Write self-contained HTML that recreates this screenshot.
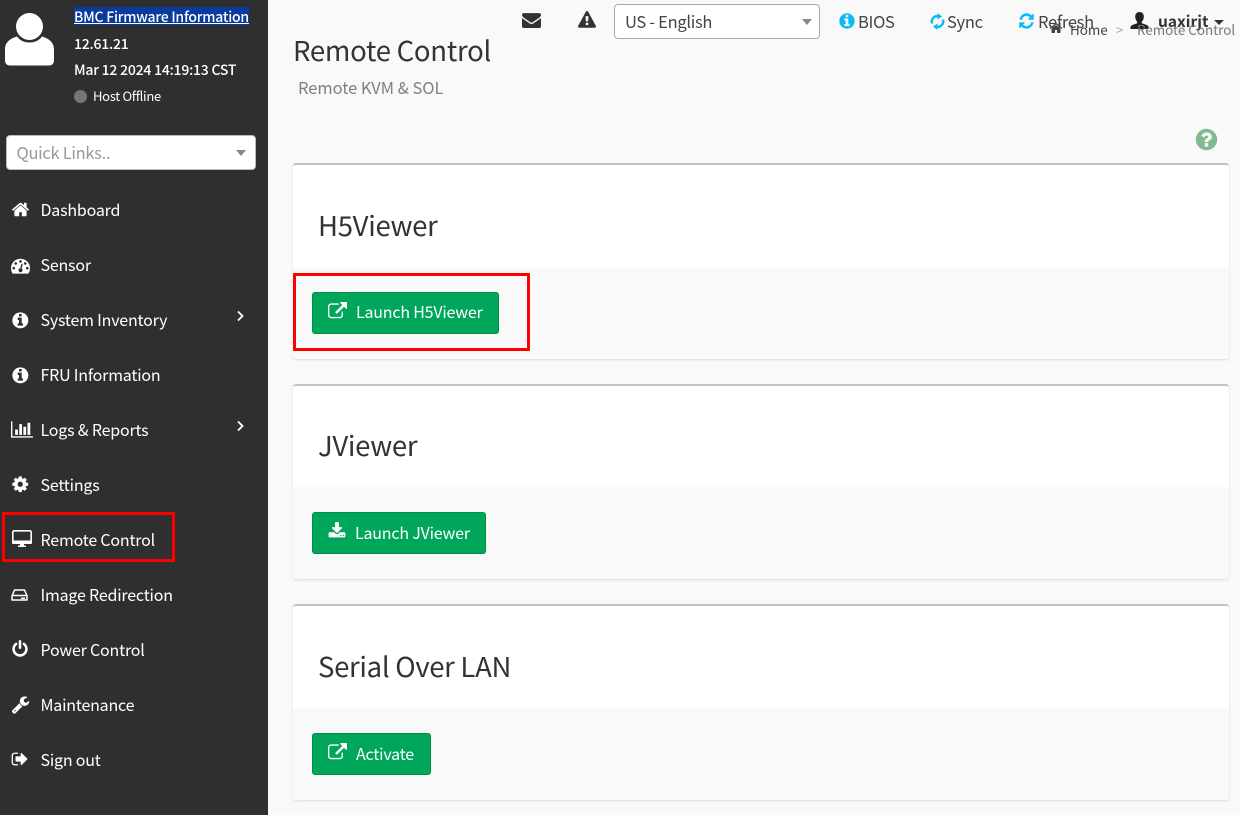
<!DOCTYPE html>
<html lang="en"><head><meta charset="utf-8"><title>Remote Control</title>
<style>
html,body{margin:0;padding:0;width:1240px;height:815px;overflow:hidden;background:#f9f9f9}
body{position:relative;font-family:"Noto Sans CJK SC","Liberation Sans",sans-serif;color:#444}
.t{position:absolute;white-space:nowrap;line-height:24px;height:24px}
svg{position:absolute;display:block}
#side{position:absolute;left:0;top:0;width:268px;height:815px;background:#2f2f2f}
.m{color:#fff;font-size:16px;letter-spacing:-.2px;left:40.5px}
.w{fill:#fff}
.s{color:#fff;font-size:14px;font-weight:500;letter-spacing:-.22px}
.card{position:absolute;left:293px;width:936px;background:#f9f9f9;border-top:2px solid #c2c2c2;border-radius:3px;box-shadow:0 1px 2px rgba(0,0,0,.12);box-sizing:border-box}
.card i{position:absolute;left:0;top:0;width:100%;background:#fff;display:block;border-radius:3px 3px 0 0}
.h{font-size:27.5px;letter-spacing:-.3px;color:#333;left:318px}
.btn{position:absolute;left:312px;height:42px;background:#00a65a;border:1px solid #008d4c;border-radius:3px;box-sizing:border-box}
.bt{color:#fff;font-size:16px;letter-spacing:-.2px}
.sel{position:absolute;background:#fff;border:1px solid #aaa;border-radius:4px;box-sizing:border-box}
.car{position:absolute;width:0;height:0;border-left:5.5px solid transparent;border-right:5.5px solid transparent;border-top:6px solid #888}
.red{position:absolute;border:3px solid #f00;box-sizing:border-box}
.top{font-size:16.5px;letter-spacing:-.3px;color:#444}
</style></head><body>
<svg width="0" height="0" style="position:absolute"><defs>
<symbol id="home" viewBox="0 0 1792 1792"><path d="M1472 992v480q0 26-19 45t-45 19h-384v-384h-256v384h-384q-26 0-45-19t-19-45v-480q0-1 .5-3t.5-3l575-474 575 474q1 2 1 6zm223-69l-62 74q-8 9-21 11h-3q-13 0-21-7l-692-577-692 577q-12 8-24 7-13-2-21-11l-62-74q-8-10-7-23.5t11-20.5l719-599q32-26 76-26t76 26l244 204v-195q0-14 9-23t23-9h192q14 0 23 9t9 23v408l219 182q10 8 11 21.5t-7 23.5z"/></symbol>
<symbol id="info" viewBox="0 0 1792 1792"><path d="M1152 1376v-160q0-14-9-23t-23-9h-96v-512q0-14-9-23t-23-9h-320q-14 0-23 9t-9 23v160q0 14 9 23t23 9h96v320h-96q-14 0-23 9t-9 23v160q0 14 9 23t23 9h448q14 0 23-9t9-23zm-128-896v-160q0-14-9-23t-23-9h-192q-14 0-23 9t-9 23v160q0 14 9 23t23 9h192q14 0 23-9t9-23zm640 416q0 209-103 385.5t-279.5 279.5-385.5 103-385.5-103-279.5-279.5-103-385.5 103-385.5 279.5-279.5 385.5-103 385.5 103 279.5 279.5 103 385.5z"/></symbol>
<symbol id="ext" viewBox="0 0 1792 1792"><path d="M1408 928v320q0 119-84.5 203.5t-203.5 84.5h-832q-119 0-203.5-84.5t-84.5-203.5v-832q0-119 84.5-203.5t203.5-84.5h704q14 0 23 9t9 23v64q0 14-9 23t-23 9h-704q-66 0-113 47t-47 113v832q0 66 47 113t113 47h832q66 0 113-47t47-113v-320q0-14 9-23t23-9h64q14 0 23 9t9 23zm384-864v512q0 26-19 45t-45 19-45-19l-176-176-652 652q-10 10-23 10t-23-10l-114-114q-10-10-10-23t10-23l652-652-176-176q-19-19-19-45t19-45 45-19h512q26 0 45 19t19 45z"/></symbol>
<symbol id="refresh" viewBox="0 0 1792 1792" preserveAspectRatio="none"><path d="M1639 1056q0 5-1 7-64 268-268 434.5t-478 166.5q-146 0-282.5-55t-243.5-157l-129 129q-19 19-45 19t-45-19-19-45v-448q0-26 19-45t45-19h448q26 0 45 19t19 45-19 45l-137 137q71 66 161 102t187 36q134 0 250-65t186-179q11-17 53-117 8-23 30-23h192q13 0 22.5 9.5t9.5 22.5zm25-800v448q0 26-19 45t-45 19h-448q-26 0-45-19t-19-45 19-45l138-138q-148-137-349-137-134 0-250 65t-186 179q-11 17-53 117-8 23-30 23h-199q-13 0-22.5-9.5t-9.5-22.5v-7q65-268 270-434.5t480-166.5q146 0 284 55.5t245 156.5l130-129q19-19 45-19t45 19 19 45z"/></symbol>
</defs></svg>

<div id="side">
<svg style="left:0;top:8px" width="60" height="62" viewBox="0 0 60 62"><circle class="w" cx="29.5" cy="18.500" r="13.500"/><path class="w" d="M17 28.500c-7 2-12 6-12 13v11c0 3 2 5 5 5h39c3 0 5-2 5-5V41.500c0-7-5-11-12-13-3 4-7 6-12.500 6S20 32.500 17 28.500z"/></svg>
<div style="position:absolute;left:74px;top:7px;width:175px;height:18px;background:#0a3b9c"></div>
<div class="t s" style="left:74px;top:5px;text-decoration:underline">BMC Firmware Information</div>
<div class="t s" style="left:74px;top:32px">12.61.21</div>
<div class="t s" style="left:74px;top:58px">Mar 12 2024 14:19:13 CST</div>
<div style="position:absolute;left:74px;top:90px;width:13px;height:13px;border-radius:50%;background:#777"></div>
<div class="t" style="left:93px;top:84px;color:#fff;font-size:13px;letter-spacing:-.3px">Host Offline</div>

<div class="sel" style="left:6px;top:135px;width:250px;height:35px;border-color:#bbb"></div>
<div class="t" style="left:16.5px;top:140px;font-size:16.5px;letter-spacing:-.3px;color:#999">Quick Links..</div>
<div class="car" style="left:236px;top:150px"></div>

<svg class="w" style="left:11px;top:200px" width="19" height="19"><use href="#home"/></svg>
<div class="t m" style="top:197px">Dashboard</div>
<svg class="w" style="left:11px;top:256px" width="19" height="19" viewBox="0 0 1792 1792"><path d="M384 1152q0-53-37.5-90.5t-90.5-37.5-90.5 37.5-37.5 90.5 37.5 90.5 90.5 37.5 90.5-37.5 37.500-90.5zm192-448q0-53-37.5-90.5t-90.5-37.5-90.5 37.5-37.5 90.5 37.5 90.5 90.5 37.5 90.5-37.5 37.5-90.5zm428 481l101-382q6-26-7.5-48.5t-38.5-29.5-48 6.5-30 39.5l-101 382q-60 5-107 43.5t-63 98.5q-20 77 20 146t117 89 146-20 89-117q16-60-6-117t-72-91zm660-33q0-53-37.5-90.5t-90.5-37.5-90.5 37.5-37.5 90.5 37.5 90.5 90.5 37.5 90.5-37.5 37.5-90.5zm-640-640q0-53-37.5-90.5t-90.5-37.5-90.5 37.5-37.5 90.5 37.5 90.5 90.5 37.5 90.5-37.5 37.5-90.5zm448 192q0-53-37.5-90.5t-90.5-37.5-90.5 37.5-37.5 90.5 37.5 90.5 90.5 37.5 90.5-37.5 37.5-90.5zm320 448q0 261-141 483-19 29-54 29h-1402q-35 0-54-29-141-221-141-483 0-182 71-348t191-286 286-191 348-71 348 71 286 191 191 286 71 348z" fill-rule="evenodd"/></svg>
<div class="t m" style="top:252px">Sensor</div>
<svg class="w" style="left:11px;top:310.500px" width="18.700" height="18.700"><use href="#info"/></svg>
<div class="t m" style="top:307px">System Inventory</div>
<svg style="left:235px;top:310px" width="10" height="12" viewBox="0 0 10 12"><path d="M3 1.500 7.500 6 3 10.500" fill="none" stroke="#fff" stroke-width="1.800"/></svg>
<svg class="w" style="left:11px;top:365.500px" width="18.700" height="18.700"><use href="#info"/></svg>
<div class="t m" style="top:362px">FRU Information</div>
<svg class="w" style="left:11px;top:420px" width="22" height="19" viewBox="0 0 2048 1792" preserveAspectRatio="none"><path d="M640 896v512h-256v-512h256zm384-512v1024h-256v-1024h256zm1024 1152v128h-2048v-1536h128v1408h1920zm-640-896v768h-256v-768h256zm384-384v1152h-256v-1152h256z"/></svg>
<div class="t m" style="top:417px">Logs &amp; Reports</div>
<svg style="left:235px;top:420px" width="10" height="12" viewBox="0 0 10 12"><path d="M3 1.500 7.500 6 3 10.500" fill="none" stroke="#fff" stroke-width="1.800"/></svg>
<svg class="w" style="left:10.500px;top:475px" width="18.500" height="18.500" viewBox="0 0 1792 1792"><path d="M1152 896q0-106-75-181t-181-75-181 75-75 181 75 181 181 75 181-75 75-181zm512-109v222q0 12-8 23t-20 13l-185 28q-19 54-39 91 35 50 107 138 10 12 10 25t-9 23q-27 37-99 108t-94 71q-12 0-26-9l-138-108q-44 23-91 38-16 136-29 186-7 28-36 28h-222q-14 0-24.5-8.5t-11.5-21.5l-28-184q-49-16-90-37l-141 107q-10 9-25 9-14 0-25-11-126-114-165-168-7-10-7-23 0-12 8-23 15-21 51-66.5t54-70.5q-27-50-41-99l-183-27q-13-2-21-12.5t-8-23.5v-222q0-12 8-23t19-13l186-28q14-46 39-92-40-57-107-138-10-12-10-24 0-10 9-23 26-36 98.5-107.5t94.5-71.5q13 0 26 10l138 107q44-23 91-38 16-136 29-186 7-28 36-28h222q14 0 24.5 8.5t11.500 21.5l28 184q49 16 90 37l142-107q9-9 24-9 13 0 25 10 129 119 165 170 7 8 7 22 0 12-8 23-15 21-51 66.5t-54 70.5q26 50 41 98l183 28q13 2 21 12.5t8 23.5z"/></svg>
<div class="t m" style="top:472px">Settings</div>
<svg style="left:12px;top:530px" width="20" height="18" viewBox="0 0 20 18"><rect x="0.800" y="0.800" width="18.400" height="12.400" rx="1.500" fill="none" stroke="#fff" stroke-width="1.600"/><rect x="0" y="10.500" width="20" height="3.500" rx="1" fill="#fff"/><rect x="8" y="14" width="4" height="2" fill="#fff"/><rect x="6" y="15.500" width="8" height="1.500" fill="#fff"/></svg>
<div class="t m" style="top:527px">Remote Control</div>
<svg style="left:11px;top:588px" width="17" height="14" viewBox="0 0 17 14"><path d="M1 8 3.500 2h10L16 8v4H1z" fill="none" stroke="#fff" stroke-width="1.500" stroke-linejoin="round"/><path d="M1 7.500h15" stroke="#fff" stroke-width="1.500"/><rect x="10" y="9.500" width="4" height="1.500" fill="#fff"/></svg>
<div class="t m" style="top:582px">Image Redirection</div>
<svg class="w" style="left:11px;top:640px" width="18" height="18" viewBox="0 0 1792 1792"><path d="M1664 896q0 156-61 298t-164 245-245 164-298 61-298-61-245-164-164-245-61-298q0-182 80.5-343t226.5-270q43-32 95.5-25t83.5 50q32 42 24.5 94.5t-49.5 84.5q-98 74-151.5 181t-53.5 228q0 104 40.5 198.5t109.5 163.5 163.5 109.5 198.5 40.5 198.5-40.5 163.5-109.5 109.5-163.5 40.5-198.5q0-121-53.5-228t-151.5-181q-42-32-49.5-84.5t24.5-94.5q31-43 84-50t95 25q146 109 226.5 270t80.5 343zm-640-768v640q0 52-38 90t-90 38-90-38-38-90v-640q0-52 38-90t90-38 90 38 38 90z"/></svg>
<div class="t m" style="top:637px">Power Control</div>
<svg class="w" style="left:11px;top:695px" width="19" height="19" viewBox="0 0 1792 1792"><path d="M448 1472q0-26-19-45t-45-19-45 19-19 45 19 45 45 19 45-19 19-45zm644-420l-682 682q-37 37-90 37-52 0-91-37l-106-108q-38-36-38-90 0-53 38-91l681-681q39 98 114.5 173.5t173.5 114.5zm634-435q0 39-23 106-47 134-164.5 217.5t-258.5 83.5q-185 0-316.5-131.5t-131.5-316.5 131.5-316.5 316.5-131.5q58 0 121.5 16.5t107.5 46.5q16 11 16 28t-16 28l-293 169v224l193 107q5-3 79-48.5t135.5-81 70.5-35.5q15 0 23.5 10t8.5 25z"/></svg>
<div class="t m" style="top:692px">Maintenance</div>
<svg class="w" style="left:11px;top:750px" width="18" height="18" viewBox="0 0 1792 1792"><path d="M704 1440q0 4 1 20t.5 26.5-3 23.5-10 19.5-20.5 6.5h-320q-119 0-203.5-84.5t-84.5-203.5v-704q0-119 84.5-203.5t203.5-84.5h320q13 0 22.5 9.5t9.5 22.5q0 4 1 20t.5 26.5-3 23.5-10 19.5-20.5 6.5h-320q-66 0-113 47t-47 113v704q0 66 47 113t113 47h312l11.5 1 11.5 3 8 5.5 7 9 2 13.5zm928-544q0 26-19 45l-544 544q-19 19-45 19t-45-19-19-45v-288h-448q-26 0-45-19t-19-45v-384q0-26 19-45t45-19h448v-288q0-26 19-45t45-19 45 19l544 544q19 19 19 45z"/></svg>
<div class="t m" style="top:747px">Sign out</div>
<div class="red" style="left:2px;top:512px;width:173px;height:50px"></div>
</div>

<svg style="left:522px;top:12px;fill:#333" width="19" height="19" viewBox="0 0 1792 1792"><path d="M1792 710v794q0 66-47 113t-113 47h-1472q-66 0-113-47t-47-113v-794q44 49 101 87 362 246 497 345 57 42 92.5 65.5t94.500 48 110 24.5h2q51 0 110-24.5t94.5-48 92.5-65.5q170-123 498-345 57-39 100-87zm0-294q0 79-49 151t-122 123q-376 261-468 325-10 7-42.5 30.5t-54 38-52 32.5-57.5 27-50 9h-2q-23 0-50-9t-57.5-27-52-32.5-54-38-42.5-30.5q-91-64-262-182.5t-205-142.5q-62-42-117-115.5t-55-136.5q0-78 41.5-130t118.5-52h1472q65 0 112.5 47t47.5 113z" transform="translate(0 -150)"/></svg>
<svg style="left:578px;top:11px;fill:#333" width="18" height="18" viewBox="0 0 1792 1792"><path d="M1024 1375v-190q0-14-9.5-23.5t-22.5-9.5h-192q-13 0-22.5 9.5t-9.5 23.5v190q0 14 9.5 23.5t22.5 9.5h192q13 0 22.5-9.5t9.5-23.5zm-2-374l18-459q0-12-10-19-13-11-24-11h-220q-11 0-24 11-10 7-10 21l17 457q0 10 10 16.5t24 6.5h185q14 0 23.5-6.5t10.5-16.5zm-14-934l768 1408q35 63-2 126-17 29-46.5 46t-63.5 17h-1536q-34 0-63.5-17t-46.5-46q-37-63-2-126l768-1408q17-31 47-49t65-18 65 18 47 49z"/></svg>
<div class="sel" style="left:614px;top:4px;width:206px;height:35px"></div>
<div class="t top" style="left:625px;top:9px">US - English</div>
<div class="car" style="left:802px;top:19px"></div>

<svg style="left:838px;top:12px;fill:#0dbaf8" width="18" height="18"><use href="#info"/></svg>
<div class="t top" style="left:858px;top:9px">BIOS</div>
<svg style="left:930px;top:13px" width="15" height="17" viewBox="0 0 15 17"><path d="M2.100 10.500A5.500 5.500 0 0 1 8.500 3.300M12.900 6.500A5.500 5.500 0 0 1 6.500 13.700" fill="none" stroke="#0dbaf8" stroke-width="2.400"/><path d="M7.500 0 12 3.500 7.500 6.500zM7.500 17 3 13.500 7.500 10.500z" fill="#0dbaf8"/></svg>
<div class="t top" style="left:947px;top:9px">Sync</div>
<svg style="left:1018px;top:12px;fill:#0dbaf8" width="17" height="18"><use href="#refresh"/></svg>
<div class="t top" style="left:1038px;top:9px">Refresh</div>
<svg style="left:1130px;top:11px;fill:#222" width="19" height="19" viewBox="0 0 19 19"><path d="M9.500 1c2.800 0 4.300 2 4.300 4.600 0 2-.8 4-2 5.100v1.500c2.300 1 5.700 1.700 6.700 3.300v2.500H.5v-2.500c1-1.600 4.400-2.300 6.700-3.300v-1.500c-1.200-1.100-2-3.100-2-5.100C5.200 3 6.700 1 9.500 1z"/></svg>
<div class="t" style="left:1158px;top:9px;font-size:15.5px;font-weight:700;color:#333">uaxirjt</div>
<div style="position:absolute;left:1214px;top:20px;width:0;height:0;border-left:5px solid transparent;border-right:5px solid transparent;border-top:5px solid #333"></div>

<svg style="left:1049px;top:21px;fill:#444" width="14" height="14"><use href="#home"/></svg>
<div class="t" style="left:1070px;top:17px;font-size:13.4px;color:#444">Home</div>
<div class="t" style="left:1116px;top:17px;font-size:13.4px;color:#aaa">&gt;</div>
<div class="t" style="left:1137px;top:17px;font-size:13.4px;color:#777">Remote Control</div>

<div class="t" style="left:293px;top:37px;font-size:27.5px;letter-spacing:-.25px;color:#333">Remote Control</div>
<div class="t" style="left:298px;top:75px;font-size:16.5px;letter-spacing:-.05px;color:#808080">Remote KVM &amp; SOL</div>
<svg style="left:1194px;top:127px;fill:#7fbb8e" width="25" height="25" viewBox="0 0 1792 1792"><path d="M1024 1376v-192q0-14-9-23t-23-9h-192q-14 0-23 9t-9 23v192q0 14 9 23t23 9h192q14 0 23-9t9-23zm256-672q0-88-55.500-163t-138.500-116-170-41q-243 0-371 213-15 24 8 42l132 100q7 6 19 6 16 0 25-12 53-68 86-92 34-24 86-24 48 0 85.500 26t37.500 59q0 38-20 61t-68 45q-63 28-115.500 86.500t-52.500 125.500v36q0 14 9 23t23 9h192q14 0 23-9t9-23q0-19 21.500-49.500t54.500-49.500q32-18 49-28.500t46-35 44.500-48 28-60.500 12.500-81zm384 192q0 209-103 385.500t-279.500 279.500-385.500 103-385.500-103-279.500-279.500-103-385.500 103-385.500 279.500-279.500 385.500-103 385.500 103 279.500 279.500 103 385.500z"/></svg>

<div class="card" style="top:163px;height:196px"><i style="height:102px"></i></div>
<div class="card" style="top:384px;height:195px"><i style="height:101px"></i></div>
<div class="card" style="top:604px;height:196px"><i style="height:102px"></i></div>
<div class="t h" style="top:212px">H5Viewer</div>
<div class="t h" style="top:432px">JViewer</div>
<div class="t h" style="top:653px">Serial Over LAN</div>

<div class="btn" style="top:292px;width:187px"></div>
<svg style="left:328px;top:302px;fill:#fff" width="19" height="19"><use href="#ext"/></svg>
<div class="t bt" style="left:356px;top:299px">Launch H5Viewer</div>
<div class="btn" style="top:512px;width:174px"></div>
<svg style="left:328px;top:522px;fill:#fff" width="18" height="18" viewBox="0 0 1792 1792"><path d="M1344 1344q0-26-19-45t-45-19-45 19-19 45 19 45 45 19 45-19 19-45zm256 0q0-26-19-45t-45-19-45 19-19 45 19 45 45 19 45-19 19-45zm128-224v320q0 40-28 68t-68 28h-1472q-40 0-68-28t-28-68v-320q0-40 28-68t68-28h465l135 136q58 56 136 56t136-56l136-136h464q40 0 68 28t28 68zm-325-569q17 41-14 70l-448 448q-18 19-45 19t-45-19l-448-448q-31-29-14-70 17-39 59-39h256v-448q0-26 19-45t45-19h256q26 0 45 19t19 45v448h256q42 0 59 39z"/></svg>
<div class="t bt" style="left:355px;top:520px">Launch JViewer</div>
<div class="btn" style="top:733px;width:119px"></div>
<svg style="left:328px;top:743px;fill:#fff" width="19" height="19"><use href="#ext"/></svg>
<div class="t bt" style="left:356px;top:741px">Activate</div>
<div class="red" style="left:293px;top:273px;width:237px;height:78px"></div>
</body></html>
